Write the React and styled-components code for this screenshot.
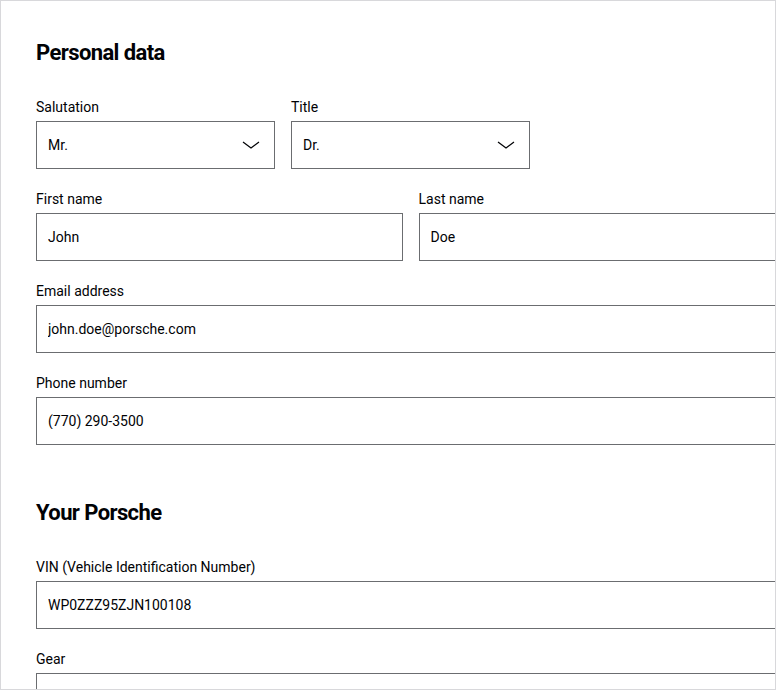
import styled, { createGlobalStyle } from 'styled-components';

const GlobalStyle = createGlobalStyle`
  html, body {
    margin: 0;
    padding: 0;
    background: #fff;
  }
  body {
    font-family: Roboto, "Liberation Sans", sans-serif;
    color: #010205;
  }
`;

const Frame = styled.div`
  box-sizing: border-box;
  width: 776px;
  height: 690px;
  border: 1px solid #d8d8db;
  overflow: hidden;
  background: #fff;
`;

const Form = styled.form`
  width: 749px;
  padding: 36px 0 0 35px;
`;

const Heading = styled.h2`
  margin: 0 0 28px;
  font-size: 22px;
  line-height: 32px;
  font-weight: 700;
  letter-spacing: -0.6px;
`;

const Grid = styled.div`
  display: grid;
  grid-template-columns: repeat(${(p) => p.$cols || 1}, 1fr);
  column-gap: 16px;
  margin-bottom: 20px;
`;

const Section = styled.section`
  margin-bottom: ${(p) => p.$gap || 0}px;
`;

const Field = styled.label`
  display: flex;
  flex-direction: column;
  gap: 4px;
`;

const Label = styled.span`
  font-size: 14px;
  line-height: 20px;
  color: #010205;
`;

const Box = styled.div`
  box-sizing: border-box;
  height: 48px;
  border: 1px solid #6b6d70;
  display: flex;
  align-items: center;
  padding: 0 11px;
  font-size: 14px;
  background: #fff;
`;

const Input = styled.input`
  border: 0;
  outline: none;
  padding: 0;
  width: 100%;
  font: inherit;
  font-size: 14px;
  color: #010205;
  background: transparent;
`;

const Value = styled.span`
  flex: 1;
`;

const Chevron = styled.svg`
  width: 20px;
  height: 20px;
  margin-right: 2px;
`;

const Select = ({ label, value }) => (
  <Field>
    <Label>{label}</Label>
    <Box>
      <Value>{value}</Value>
      <Chevron viewBox="0 0 20 20" fill="none">
        <path d="M2 7 L10 13 L18 7" stroke="#010205" strokeWidth="1.2" />
      </Chevron>
    </Box>
  </Field>
);

const Text = ({ label, value }) => (
  <Field>
    <Label>{label}</Label>
    <Box>
      <Input defaultValue={value} />
    </Box>
  </Field>
);

export default function App() {
  return (
    <>
      <GlobalStyle />
      <Frame>
        <Form>
          <Section $gap={52}>
            <Heading>Personal data</Heading>
            <Grid $cols={3}>
              <Select label="Salutation" value="Mr." />
              <Select label="Title" value="Dr." />
            </Grid>
            <Grid $cols={2}>
              <Text label="First name" value="John" />
              <Text label="Last name" value="Doe" />
            </Grid>
            <Grid>
              <Text label="Email address" value="john.doe@porsche.com" />
            </Grid>
            <Grid>
              <Text label="Phone number" value="(770) 290-3500" />
            </Grid>
          </Section>
          <Section>
            <Heading>Your Porsche</Heading>
            <Grid>
              <Text label="VIN (Vehicle Identification Number)" value="WP0ZZZ95ZJN100108" />
            </Grid>
            <Grid>
              <Text label="Gear" value="" />
            </Grid>
          </Section>
        </Form>
      </Frame>
    </>
  );
}
